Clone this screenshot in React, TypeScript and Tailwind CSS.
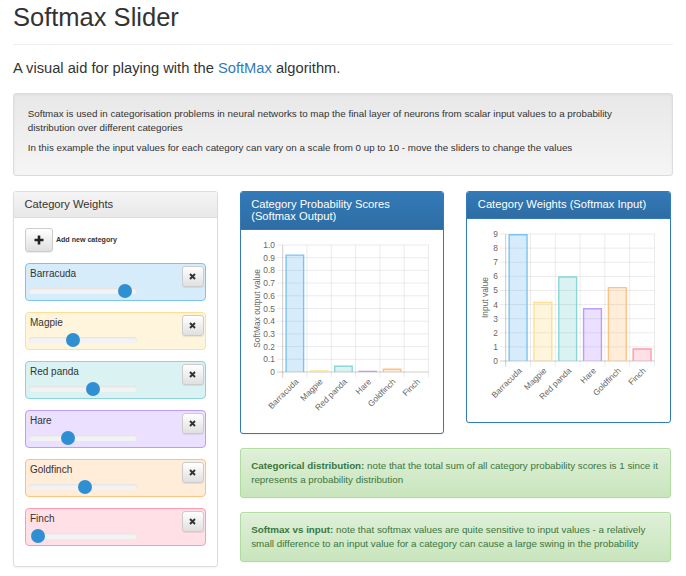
import React from 'react';

type Cat = { name: string; v: number; rgb: string; stroke: string; card: string };

const cats: Cat[] = [
  { name: 'Barracuda', v: 8.95, rgb: '54,162,235', stroke: '#7cc3f2', card: 'bg-[#d7ecfb] border-[#7cc3f2]' },
  { name: 'Magpie', v: 4.15, rgb: '255,206,86', stroke: '#ffdf91', card: 'bg-[#fff5dd] border-[#ffdf91]' },
  { name: 'Red panda', v: 5.95, rgb: '75,192,192', stroke: '#8ad6d6', card: 'bg-[#dbf2f2] border-[#8ad6d6]' },
  { name: 'Hare', v: 3.7, rgb: '153,102,255', stroke: '#bd9cff', card: 'bg-[#ebe0ff] border-[#bd9cff]' },
  { name: 'Goldfinch', v: 5.2, rgb: '255,159,64', stroke: '#ffc183', card: 'bg-[#ffecd9] border-[#ffc183]' },
  { name: 'Finch', v: 0.85, rgb: '255,99,132', stroke: '#ff9aaf', card: 'bg-[#ffe0e6] border-[#ff9aaf]' },
];

const exps = cats.map((c) => Math.exp(c.v));
const sum = exps.reduce((a, b) => a + b, 0);
const probs = exps.map((e) => e / sum);

const FONT = "'Liberation Sans', Arial, sans-serif";

function Chart({
  values,
  max,
  steps,
  fmt,
  axisX,
  titleX,
  title,
}: {
  values: number[];
  max: number;
  steps: number;
  fmt: (i: number) => string;
  axisX: number;
  titleX: number;
  title: string;
}) {
  const W = 203;
  const H = 203;
  const top = 15;
  const zero = 142;
  const plotH = zero - top;
  const right = 187.5;
  const cw = (right - axisX) / 6;
  const bw = cw * 0.72;
  const grid = [];
  for (let i = 0; i <= steps; i++) {
    const y = zero - (i / steps) * plotH;
    grid.push(
      <g key={'h' + i}>
        <line x1={axisX - 5.7} x2={right} y1={y} y2={y} stroke={i === 0 ? 'rgba(0,0,0,0.25)' : 'rgba(0,0,0,0.1)'} strokeWidth={0.8} />
        <text x={axisX - 7.7} y={y} textAnchor="end" dominantBaseline="central" fontSize={8.4} fill="#666" fontFamily={FONT}>
          {fmt(i)}
        </text>
      </g>
    );
  }
  const vgrid = [];
  for (let i = 0; i <= 6; i++) {
    const x = axisX + i * cw;
    vgrid.push(
      <line key={'v' + i} x1={x} x2={x} y1={top} y2={zero + 5.7} stroke={i === 0 ? 'rgba(0,0,0,0.25)' : 'rgba(0,0,0,0.1)'} strokeWidth={0.8} />
    );
  }
  return (
    <svg width={W} height={H} viewBox={`0 0 ${W} ${H}`} className="block">
      {vgrid}
      {grid}
      {values.map((v, i) => {
        const cx = axisX + (i + 0.5) * cw;
        const h = (v / max) * plotH;
        if (h < 0.2) return null;
        const x0 = cx - bw / 2;
        const y0 = zero - h;
        return (
          <g key={'b' + i}>
            <rect x={x0} y={y0} width={bw} height={h} fill={`rgba(${cats[i].rgb},0.2)`} />
            <path d={`M${x0} ${zero} L${x0} ${y0} L${x0 + bw} ${y0} L${x0 + bw} ${zero}`} fill="none" stroke={cats[i].stroke} strokeWidth={1.4} />
          </g>
        );
      })}
      {cats.map((c, i) => {
        const cx = axisX + (i + 0.5) * cw;
        return (
          <text
            key={'l' + i}
            transform={`translate(${cx + 2} ${zero + 8}) rotate(-45)`}
            textAnchor="end"
            dominantBaseline="central"
            fontSize={8.4}
            fill="#666"
            fontFamily={FONT}
          >
            {c.name}
          </text>
        );
      })}
      <text
        transform={`translate(${titleX} 78.5) rotate(-90)`}
        textAnchor="middle"
        dominantBaseline="central"
        fontSize={8.4}
        fill="#666"
        fontFamily={FONT}
      >
        {title}
      </text>
    </svg>
  );
}

const btn =
  'flex items-center justify-center rounded-[3px] border border-[#ccc] bg-linear-to-b from-white to-[#e0e0e0] shadow-[inset_0_1px_0_rgba(255,255,255,0.15),0_1px_1px_rgba(0,0,0,0.075)]';

function CategoryCard({ c }: { c: Cat }) {
  return (
    <div className={`flex h-[38px] rounded-[4px] border pl-[3px] pr-[1.3px] pt-[2px] ${c.card}`}>
      <div className="flex flex-1 flex-col">
        <div className="ml-[1.5px] mt-[1.7px] text-[10px] leading-[14px] text-[#333]">{c.name}</div>
        <div className="relative mt-[6.3px] h-[6px] w-[108px] rounded-full bg-[#f3f3f3] shadow-[inset_0_1px_2px_rgba(0,0,0,0.08)]">
          <div
            className="absolute top-[-4px] h-[14px] w-[14px] rounded-full bg-[#2f8fd3]"
            style={{ left: c.v * 10.8 - 7 }}
          />
        </div>
      </div>
      <div className={`${btn} h-[21px] w-[22px]`}>
        <svg width="7" height="7" viewBox="0 0 7 7">
          <path d="M1 1 L6 6 M6 1 L1 6" stroke="#333" strokeWidth="1.9" strokeLinecap="butt" />
        </svg>
      </div>
    </div>
  );
}

const alertCls =
  'mt-[14px] rounded-[3px] border border-[#b2dba1] bg-linear-to-b from-[#dff0d8] to-[#c8e5bc] py-[10px] pl-[10.5px] pr-[6px] text-[9.8px] leading-[14px] text-[#3c763d] shadow-[inset_0_1px_0_rgba(255,255,255,0.25),0_1px_2px_rgba(0,0,0,0.05)]';

const primaryHead =
  'rounded-t-[2px] border-b border-[#337ab7] bg-linear-to-b from-[#337ab7] to-[#2e6da4] px-[10.5px] py-[7px] text-[11.2px] leading-[11.6px] text-white';

export default function App() {
  return (
    <div className="min-h-[576px] w-[686px] bg-white px-[13px] pb-[20px] font-['Liberation_Sans',Arial,sans-serif] text-[#333]">
      <div className="border-b border-[#eee] pb-[12px] pt-[3px]">
        <h1 className="text-[25.5px] font-normal leading-[28.6px]">Softmax Slider</h1>
      </div>
      <p className="mt-[13.8px] text-[14.7px] leading-[21px]">
        A visual aid for playing with the <span className="text-[#337ab7]">SoftMax</span> algorithm.
      </p>
      <div className="mt-[13.6px] rounded-[3px] border border-[#dcdcdc] bg-linear-to-b from-[#e8e8e8] to-[#f5f5f5] px-[13.7px] pb-[13.3px] pt-[13px] text-[9.8px] leading-[14px] shadow-[inset_0_1px_3px_rgba(0,0,0,0.05)]">
        <p className="mb-[6px] pr-[4px]">
          Softmax is used in categorisation problems in neural networks to map the final layer of neurons from scalar input
          values to a probability distribution over different categories
        </p>
        <p className="mb-[7px]">
          In this example the input values for each category can vary on a scale from 0 up to 10 - move the sliders to change
          the values
        </p>
      </div>

      <div className="mt-[14.7px] grid grid-cols-[204.67px_431.33px] items-start gap-x-[22px]">
        <div className="rounded-[3px] border border-[#ddd] bg-white shadow-[0_1px_2px_rgba(0,0,0,0.05)]">
          <div className="flex h-[26.3px] items-center rounded-t-[2px] border-b border-[#ddd] bg-linear-to-b from-[#f5f5f5] to-[#e8e8e8] px-[10.5px] text-[11.2px]">
            Category Weights
          </div>
          <div className="px-[10.5px] pb-[20px] pt-[10px]">
            <div className="flex items-center gap-[3.4px]">
              <div className={`${btn} h-[24px] w-[28px]`}>
                <svg width="10" height="10" viewBox="0 0 10 10">
                  <path d="M3.7 0.5 H6.3 V3.7 H9.5 V6.3 H6.3 V9.5 H3.7 V6.3 H0.5 V3.7 H3.7 Z" fill="#222" />
                </svg>
              </div>
              <span className="text-[7.1px] font-bold">Add new category</span>
            </div>
            <div className="mt-[10.4px] flex flex-col gap-[11px]">
              {cats.map((c) => (
                <CategoryCard key={c.name} c={c} />
              ))}
            </div>
          </div>
        </div>

        <div className="flex flex-col">
          <div className="grid grid-cols-2 items-start gap-x-[22px]">
            <div className="rounded-[3px] border border-[#337ab7] bg-white shadow-[0_1px_2px_rgba(0,0,0,0.05)]">
              <div className={primaryHead}>Category Probability Scores (Softmax Output)</div>
              <Chart
                values={probs}
                max={1}
                steps={10}
                fmt={(i) => (i === 0 ? '0' : (i / 10).toFixed(1))}
                axisX={41.7}
                titleX={15.5}
                title="SoftMax output value"
              />
            </div>
            <div className="rounded-[3px] border border-[#337ab7] bg-white shadow-[0_1px_2px_rgba(0,0,0,0.05)]">
              <div className={primaryHead}>Category Weights (Softmax Input)</div>
              <Chart
                values={cats.map((c) => c.v)}
                max={9}
                steps={9}
                fmt={(i) => String(i)}
                axisX={38.7}
                titleX={18}
                title="Input value"
              />
            </div>
          </div>
          <div className={alertCls}>
            <b>Categorical distribution:</b> note that the total sum of all category probability scores is 1 since it represents a
            probability distribution
          </div>
          <div className={alertCls}>
            <b>Softmax vs input:</b> note that softmax values are quite sensitive to input values - a relatively small difference to
            an input value for a category can cause a large swing in the probability
          </div>
        </div>
      </div>
    </div>
  );
}
